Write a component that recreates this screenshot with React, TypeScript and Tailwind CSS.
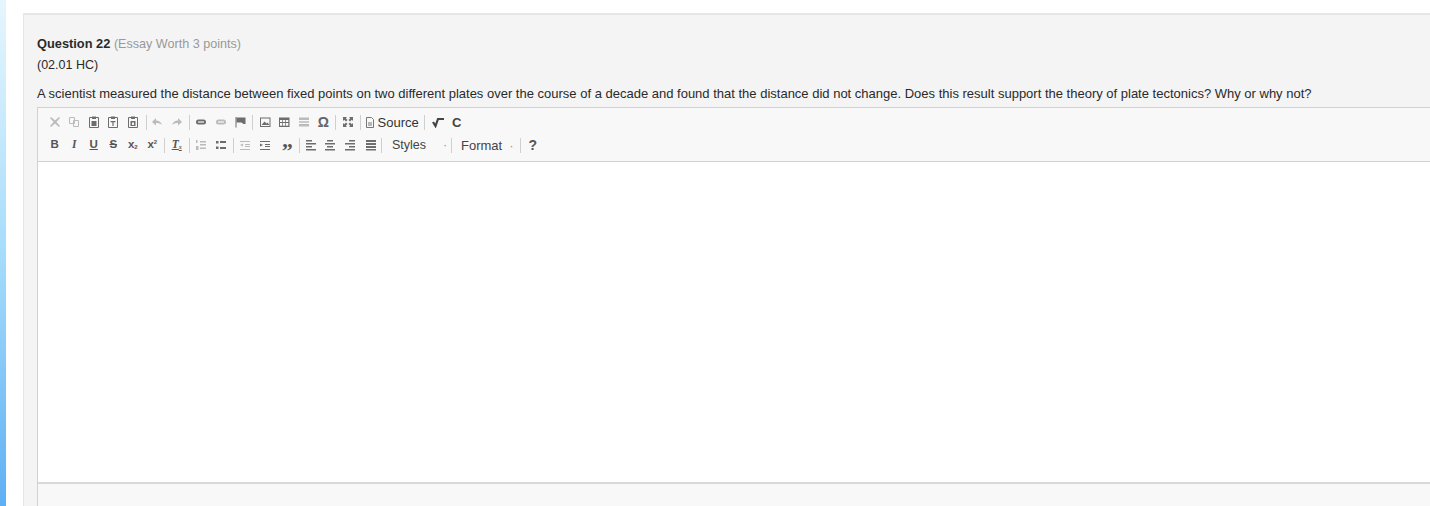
import { ReactNode } from "react"

function Btn({ children, muted }: { children: ReactNode; muted?: boolean }) {
    return (
        <span className={`flex w-[19.5px] h-[16px] items-center justify-center ${muted ? "opacity-30" : "opacity-70"}`}>
            <svg width="12" height="12" viewBox="0 0 12 12" fill="#333" stroke="none">{children}</svg>
        </span>
    )
}

function Sep({ className }: { className?: string }) {
    return <span className={`mx-[2px] h-[15px] w-px bg-[#cfcfcf] ${className ?? ""}`} />
}

function Letter({ children, className }: { children: ReactNode; className?: string }) {
    return (
        <span className={`flex w-[19.5px] h-[16px] items-center justify-center text-[11.5px] font-bold text-[#555] ${className ?? ""}`}>
            {children}
        </span>
    )
}

const clipBase = (
    <>
        <path d="M1.500 1.500h9v10h-9z" fill="none" stroke="#333" />
        <path d="M4 0.500h4v2.500H4z" />
    </>
)

const alignLines = {
    left: "M1 1h6v1.500H1zM1 4h10v1.500H1zM1 7h6v1.500H1zM1 10h10v1.500H1z",
    center: "M3 1h6v1.500H3zM1 4h10v1.500H1zM3 7h6v1.500H3zM1 10h10v1.500H1z",
    right: "M5 1h6v1.500H5zM1 4h10v1.500H1zM5 7h6v1.500H5zM1 10h10v1.500H1z",
    block: "M1 1h10v2H1zM1 4h10v2H1zM1 7h10v2H1zM1 10h10v1.500H1z",
}

export default function App() {
    return (
        <div className="flex h-[506px] w-[1430px] overflow-hidden bg-white font-['Liberation_Sans',Arial,sans-serif] text-[13px] text-[#2a2a2a]">
            <div className="w-[6px] shrink-0 bg-gradient-to-b from-[#e6f6fe] via-[#a6dcfb] to-[#5db0f4]" />

            <div className="ml-[17px] mt-[13px] min-w-0 flex-1 border-l border-t-2 border-[#e6e6e6] bg-[#f4f4f4] pl-[13px] pt-[20px]">
                <p className="leading-[18px]">
                    <span className="text-[12.8px] font-bold">Question 22</span>{" "}
                    <span className="text-[12.6px] text-[#999]">(Essay Worth 3 points)</span>
                </p>
                <p className="mt-[3px] text-[12.5px] leading-[18px]">(02.01 HC)</p>
                <p className="mt-[11px] whitespace-nowrap leading-[18px]">
                    A scientist measured the distance between fixed points on two different plates over the course of a decade and found that the distance did not change. Does this result support the theory of plate tectonics? Why or why not?
                </p>

                <div className="mt-[4px] h-[400px] border-l border-t border-[#d1d1d1] bg-[#f8f8f8]">
                    <div className="flex h-[54px] flex-col gap-[7px] border-b border-[#d1d1d1] pl-[7px] pt-[6px]">
                        <div className="flex h-[16px] items-center">
                            <Btn muted><path d="M2 1l4 3.600L10 1l1 1-3.600 4L11 10l-1 1-4-3.600L2 11l-1-1 3.600-4L1 2z" /></Btn>
                            <Btn muted><path d="M1.500 1.500h5v6h-5z" fill="none" stroke="#333" /><path d="M5.500 4.500h5v6h-5z" fill="none" stroke="#333" /></Btn>
                            <Btn>{clipBase}<path d="M3.500 5h5v5h-5z" /></Btn>
                            <Btn>{clipBase}<path d="M3.500 5h5v1.200h-5zM5.400 6.200h1.200V10H5.400z" /></Btn>
                            <Btn>{clipBase}<path d="M3.500 5h5v5h-5z" /><path d="M5 6.500h2V9H5z" fill="#f8f8f8" /></Btn>
                            <Sep className="ml-[3px] mr-[1px]" />
                            <Btn muted><path d="M1 6l4-4v2.500c3 0 5 1.500 6 4.500-1.500-1.500-3.500-2-6-2v2.500z" /></Btn>
                            <Btn muted><path d="M11 6L7 2v2.500c-3 0-5 1.500-6 4.500 1.500-1.500 3.500-2 6-2v2.500z" /></Btn>
                            <Sep />
                            <Btn><path d="M3.500 3.500h5a2.500 2.500 0 0 1 0 5h-5a2.500 2.500 0 0 1 0-5z" /><path d="M3 5.400h6v1.200H3z" fill="#f8f8f8" /></Btn>
                            <Btn muted><path d="M3.500 3.500h5a2.500 2.500 0 0 1 0 5h-5a2.500 2.500 0 0 1 0-5z" /><path d="M3 5.400h6v1.200H3z" fill="#f8f8f8" /></Btn>
                            <Btn><path d="M1.500 1h1v10.500h-1z" /><path d="M2.500 1.500h9v6.500h-2l-2-1.500h-5z" /></Btn>
                            <Sep />
                            <Btn><path d="M1 1.500h10.500v9.500H1z" /><path d="M2 2.500h8.500v7.500H2z" fill="#f8f8f8" /><path d="M2.500 9l3-3.500 2 2 1-1 2 2.500z" /></Btn>
                            <Btn><path d="M1 1.500h10.500v9.500H1z" /><path d="M2 4h2.300v2H2zM5 4h2.300v2H5zM8 4h2.300v2H8zM2 7h2.300v2.800H2zM5 7h2.300v2.800H5zM8 7h2.300v2.800H8z" fill="#f8f8f8" /></Btn>
                            <Btn muted><path d="M1 1.500h10V4H1zM1 5.300h10v1.400H1zM1 8h10v2.500H1z" /></Btn>
                            <span className="flex w-[19.5px] justify-center text-[14px] font-bold leading-none text-[#666]">Ω</span>
                            <Sep />
                            <Btn><path d="M1 1h4L3.800 2.200 5.500 4 4 5.500 2.200 3.800 1 5zM11 1v4L9.800 3.800 8 5.500 6.500 4l1.700-1.800L7 1zM1 11V7l1.200 1.200L4 6.500 5.500 8 3.800 9.800 5 11zM11 11H7l1.200-1.200L6.500 8 8 6.500l1.800 1.700L11 7z" /></Btn>
                            <Sep />
                            <span className="flex items-center gap-[3px] pl-[2px] text-[13px] leading-none text-[#333]">
                                <svg width="10" height="11" viewBox="0 0 10 11" fill="none" stroke="#777">
                                    <path d="M1.500 0.500h5l2 2v8h-7z" />
                                    <path d="M3 6h4M3 8h4" />
                                </svg>
                                Source
                            </span>
                            <Sep className="ml-[5px]" />
                            <span className="ml-[1px] flex w-[21px] justify-center">
                                <svg width="13" height="12" viewBox="0 0 13 12" fill="none" stroke="#444" strokeWidth="2.200">
                                    <path d="M1 6l2.500 4L6 3h6" />
                                </svg>
                            </span>
                            <span className="flex w-[16px] justify-center text-[13px] font-bold leading-none text-[#444]">C</span>
                        </div>

                        <div className="flex h-[16px] items-center">
                            <Letter>B</Letter>
                            <Letter className="font-['Liberation_Serif',serif] italic">I</Letter>
                            <Letter className="underline">U</Letter>
                            <Letter className="line-through">S</Letter>
                            <Letter>x<sub className="text-[6px]">2</sub></Letter>
                            <Letter>x<sup className="text-[6px]">2</sup></Letter>
                            <Sep />
                            <Letter className="font-['Liberation_Serif',serif] italic underline">T<sub className="text-[6px]">x</sub></Letter>
                            <Sep />
                            <Btn muted><path d="M1 1h1.500v3H1zM1 7h2.500v4H1zM5 2h6v1.500H5zM5 5h6v1.500H5zM5 8.500h6V10H5z" /></Btn>
                            <Btn><path d="M1 2h2.500v2.500H1zM1 7.500h2.500V10H1zM5 2h6v2H5zM5 8h6v2H5z" /></Btn>
                            <Sep />
                            <Btn muted><path d="M1 2h10v1H1zM6 5h5v1H6zM6 7h5v1H6zM1 10h10v1H1zM4 4.500v3L1 6z" /></Btn>
                            <Btn><path d="M1 2h10v1H1zM6 5h5v1H6zM6 7h5v1H6zM1 10h10v1H1zM1 4.500v3L4 6z" /></Btn>
                            <span className="ml-[3px] flex h-[16px] w-[19.5px] justify-center font-['Liberation_Serif',serif] text-[22px] font-bold leading-[28px] text-[#555]">”</span>
                            <Sep className="mr-[1px]" />
                            <Btn><path d={alignLines.left} /></Btn>
                            <Btn><path d={alignLines.center} /></Btn>
                            <Btn><path d={alignLines.right} /></Btn>
                            <span className="w-[2px]" />
                            <Btn><path d={alignLines.block} /></Btn>
                            <Sep className="ml-0" />
                            <span className="flex w-[65px] items-center pl-[8px] pt-[1px] text-[12.5px] leading-none text-[#444]">
                                Styles
                                <span className="ml-[17px] text-[#999]">·</span>
                            </span>
                            <Sep />
                            <span className="flex w-[64px] items-center pl-[7px] text-[13px] leading-none text-[#444]">
                                Format
                                <span className="ml-[7px] text-[#999]">·</span>
                            </span>
                            <Sep />
                            <span className="flex w-[19.5px] justify-center text-[14px] font-bold leading-none text-[#555]">?</span>
                        </div>
                    </div>

                    <div className="h-[322px] border-b-2 border-[#d9d9d9] bg-white" />
                </div>
            </div>
        </div>
    )
}
